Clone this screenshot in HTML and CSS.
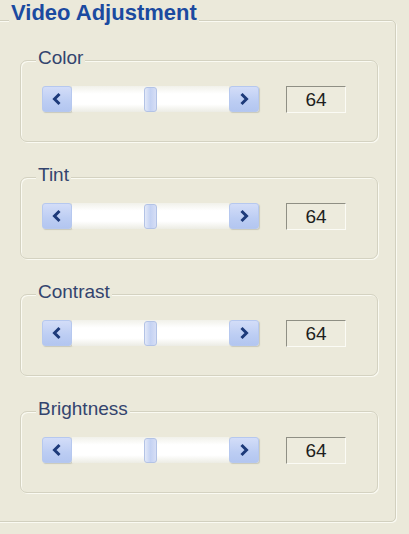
FILE: index.html
```html
<!DOCTYPE html>
<html>
<head>
<meta charset="utf-8">
<link rel="stylesheet" href="styles.css">
</head>
<body>
<div class="outer">
  <div class="outer-title">Video Adjustment</div>

  <div class="group">
    <div class="group-title">Color</div>
    <div class="row">
      <div class="btn"><svg width="12" height="14" viewBox="0 0 12 14"><path d="M8.5 2 L3.5 7 L8.5 12" fill="none" stroke="#1d3a7a" stroke-width="3"/></svg></div>
      <div class="track"><div class="thumb"></div></div>
      <div class="btn"><svg width="12" height="14" viewBox="0 0 12 14"><path d="M3.5 2 L8.5 7 L3.5 12" fill="none" stroke="#1d3a7a" stroke-width="3"/></svg></div>
      <div class="value">64</div>
    </div>
  </div>

  <div class="group">
    <div class="group-title">Tint</div>
    <div class="row">
      <div class="btn"><svg width="12" height="14" viewBox="0 0 12 14"><path d="M8.5 2 L3.5 7 L8.5 12" fill="none" stroke="#1d3a7a" stroke-width="3"/></svg></div>
      <div class="track"><div class="thumb"></div></div>
      <div class="btn"><svg width="12" height="14" viewBox="0 0 12 14"><path d="M3.5 2 L8.5 7 L3.5 12" fill="none" stroke="#1d3a7a" stroke-width="3"/></svg></div>
      <div class="value">64</div>
    </div>
  </div>

  <div class="group">
    <div class="group-title">Contrast</div>
    <div class="row">
      <div class="btn"><svg width="12" height="14" viewBox="0 0 12 14"><path d="M8.5 2 L3.5 7 L8.5 12" fill="none" stroke="#1d3a7a" stroke-width="3"/></svg></div>
      <div class="track"><div class="thumb"></div></div>
      <div class="btn"><svg width="12" height="14" viewBox="0 0 12 14"><path d="M3.5 2 L8.5 7 L3.5 12" fill="none" stroke="#1d3a7a" stroke-width="3"/></svg></div>
      <div class="value">64</div>
    </div>
  </div>

  <div class="group">
    <div class="group-title">Brightness</div>
    <div class="row">
      <div class="btn"><svg width="12" height="14" viewBox="0 0 12 14"><path d="M8.5 2 L3.5 7 L8.5 12" fill="none" stroke="#1d3a7a" stroke-width="3"/></svg></div>
      <div class="track"><div class="thumb"></div></div>
      <div class="btn"><svg width="12" height="14" viewBox="0 0 12 14"><path d="M3.5 2 L8.5 7 L3.5 12" fill="none" stroke="#1d3a7a" stroke-width="3"/></svg></div>
      <div class="value">64</div>
    </div>
  </div>
</div>
</body>
</html>
```

FILE: styles.css
```css
html, body {
  margin: 0;
  padding: 0;
  background: #ebe9da;
  font-family: "Liberation Sans", Arial, sans-serif;
  overflow: hidden;
}

body {
  width: 409px;
  height: 534px;
}

.outer {
  margin: 20px 13px 0 -2px;
  border: 1px solid #d2d0bf;
  border-radius: 0 5px 5px 0;
  box-shadow: 1px 1px 0 #fafaf2, inset 1px 1px 0 #fafaf2;
  padding: 0 0 28px 0;
}

.outer-title {
  width: fit-content;
  margin: -21px 0 0 10px;
  padding: 0 2px;
  background: #ebe9da;
  font-size: 22px;
  line-height: 26px;
  font-weight: bold;
  color: #1b4aa0;
}

.group {
  margin: 34px 17px 0 21px;
  height: 80px;
  border: 1px solid #d4d2c1;
  border-radius: 7px;
  box-shadow: 1px 1px 0 #fafaf2, inset 1px 1px 0 #fafaf2;
}

.group + .group {
  margin-top: 35px;
}

.group-title {
  width: fit-content;
  margin: -14px 0 0 15px;
  padding: 0 2px;
  background: #ebe9da;
  font-size: 19px;
  line-height: 22px;
  color: #33446e;
}

.row {
  display: flex;
  align-items: center;
  margin: 16px 0 0 21px;
  height: 28px;
}

.btn {
  width: 30px;
  height: 26px;
  box-sizing: border-box;
  border: 1px solid #b6c8ef;
  border-radius: 3px;
  background: linear-gradient(#d3ddf8, #bccdf3 60%, #b3c6f0);
  box-shadow: 1px 1px 1px #c9c9bc;
  display: flex;
  align-items: center;
  justify-content: center;
}

.track {
  width: 157px;
  height: 26px;
  background: linear-gradient(#f1f1ea, #ffffff 30%, #ffffff 70%, #ecece4);
  display: flex;
  align-items: center;
  justify-content: center;
}

.thumb {
  width: 13px;
  height: 25px;
  box-sizing: border-box;
  border: 1px solid #b3c3e6;
  border-radius: 3px;
  background: linear-gradient(90deg, #e3e9f8, #c4d2f3 50%, #d6def5);
}

.value {
  margin-left: 27px;
  width: 60px;
  height: 27px;
  box-sizing: border-box;
  border-top: 1px solid #8f8f84;
  border-left: 1px solid #8f8f84;
  border-right: 1px solid #fbfbf5;
  border-bottom: 1px solid #fbfbf5;
  background: #edebdd;
  font-size: 19px;
  line-height: 25px;
  text-align: center;
  color: #1e1e1e;
}
```
